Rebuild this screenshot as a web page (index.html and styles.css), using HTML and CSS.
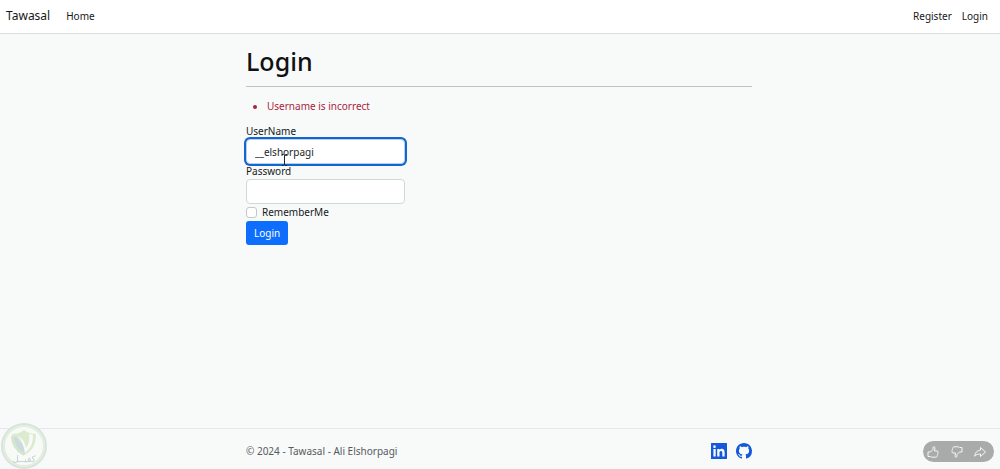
FILE: index.html
```html
<!doctype html>
<html lang="en">
  <head>
    <meta charset="UTF-8" />
    <meta name="viewport" content="width=device-width, initial-scale=1" />
    <title>Login - Tawasal</title>
    <link rel="stylesheet" href="styles.css">
  </head>

  <body>
    <header class="navbar">
      <a class="navbar-brand" href="#">Tawasal</a>
      <nav class="nav-links">
        <a href="#">Home</a>
      </nav>
      <nav class="nav-account">
        <a href="#">Register</a>
        <a href="#">Login</a>
      </nav>
    </header>

    <main class="container">
      <h1>Login</h1>
      <hr />
      <form onsubmit="event.preventDefault()">
        <ul class="validation-summary">
          <li>Username is incorrect</li>
        </ul>
        <div class="form-group">
          <label for="username">UserName</label>
          <div class="field">
            <input class="form-control focused" type="text" id="username" name="username" value="__elshorpagi" />
            <svg class="text-cursor" viewBox="0 0 7 12" aria-hidden="true">
              <path d="M1 .5h1.5l1 1 1-1H6M3.5 1.5v9M1 11.500h1.500l1-1 1 1H6" />
            </svg>
          </div>
        </div>
        <div class="form-group">
          <label for="password">Password</label>
          <input class="form-control" type="password" id="password" name="password" />
        </div>
        <div class="form-check">
          <input type="checkbox" id="remember" name="remember" />
          <label for="remember">RememberMe</label>
        </div>
        <button class="btn-primary" type="submit">Login</button>
      </form>
    </main>

    <footer class="footer">
      <div class="container footer-inner">
        <span>&copy; 2024 - Tawasal - Ali Elshorpagi</span>
        <div class="social">
          <a href="#" aria-label="LinkedIn">
            <svg viewBox="0 0 16 16">
              <path fill-rule="evenodd" d="M0 .5C0 .2.2 0 .5 0h15c.3 0 .5.2.5.5v15c0 .3-.2.5-.5.5H.5a.5.5 0 0 1-.5-.5zM2.400 6v7.500h2.300V6zM3.500 2.300a1.350 1.350 0 1 0 0 2.700 1.350 1.350 0 0 0 0-2.700zM6.200 6v7.500h2.300V9.700c0-1 .4-1.800 1.500-1.800s1.300.9 1.300 1.900v3.700h2.300V9.200c0-2.200-.8-3.400-2.800-3.400-1.200 0-2 .6-2.300 1.200V6z" />
            </svg>
          </a>
          <a href="#" aria-label="GitHub">
            <svg viewBox="0 0 16 16">
              <path d="M8 0C3.580 0 0 3.580 0 8c0 3.540 2.290 6.530 5.470 7.590.4.070.55-.17.55-.38 0-.19-.01-.82-.01-1.490-2.010.37-2.530-.49-2.690-.94-.09-.23-.48-.94-.82-1.130-.28-.15-.68-.52-.01-.53.63-.01 1.080.58 1.230.82.72 1.210 1.870.87 2.330.66.070-.52.28-.87.51-1.070-1.780-.2-3.640-.89-3.640-3.950 0-.87.31-1.590.82-2.150-.08-.2-.36-1.020.08-2.120 0 0 .67-.21 2.200.82.64-.18 1.320-.27 2-.27s1.360.09 2 .27c1.530-1.040 2.200-.82 2.200-.82.44 1.100.16 1.920.08 2.120.51.56.82 1.270.82 2.150 0 3.070-1.870 3.750-3.650 3.950.29.25.54.73.54 1.480 0 1.070-.01 1.930-.01 2.200 0 .21.15.46.55.38A8.010 8.010 0 0 0 16 8c0-4.420-3.580-8-8-8z" />
            </svg>
          </a>
        </div>
      </div>
    </footer>

    <!-- Watermark -->
    <svg class="watermark" viewBox="0 0 48 48" aria-hidden="true">
      <circle cx="24" cy="25" r="22" fill="#f7faf7" stroke="#d7e3e2" stroke-width="2" />
      <circle cx="24" cy="25" r="20" fill="none" stroke="#e1eed9" stroke-width="2" />
      <path d="M24 9c4 3 8 4 12 4 0 10-3 16-11 21C15 29 12 23 12 13c4 0 8-1 12-4z" fill="#dcebcf" />
      <path d="M14 15c4 2 8 7 10 12l1 6C17 28 14 23 14 15z" fill="#ccd9de" />
      <path d="M18 15c4 2 7 6 8 12 3-4 4-9 3-14l4 1c0 8-2 13-8 18-1-7-3-12-7-17z" fill="#f8faf8" />
      <path d="M12 15c0 8 3 14 12 19" fill="none" stroke="#d3e5c7" stroke-width="2" />
      <text x="24" y="41" text-anchor="middle">كفيــل</text>
    </svg>

    <!-- Feedback buttons -->
    <div class="reactions">
      <button type="button" aria-label="Like">
        <svg viewBox="0 0 12 12">
          <path d="M1 6h2.500L6 3.500V1.500C6 .5 8 .5 8 2L7.500 5H10c1.300 0 1.300 1.500.6 1.800.7.5.4 1.400-.2 1.600.5.6 0 1.300-.5 1.500.2.800-.3 1.300-1.100 1.300H4.500L3.500 10.500H1z" />
        </svg>
      </button>
      <button type="button" aria-label="Dislike">
        <svg viewBox="0 0 12 12">
          <path d="M11 6H8.500L6 8.500v2C6 11.500 4 11.500 4 10L4.500 7H2C.7 7 .7 5.500 1.400 5.200.7 4.700 1 3.800 1.600 3.600c-.5-.6 0-1.300.5-1.500C1.900 1.300 2.400.8 3.200.8h4.300l1 .7H11z" />
        </svg>
      </button>
      <button type="button" aria-label="Share">
        <svg viewBox="0 0 12 12">
          <path d="M6.500 1.500 11.500 6l-5 4.500V8C4 8 2 8.500.7 10.300 1 6.500 3 4.500 6.500 4z" />
        </svg>
      </button>
    </div>
  </body>
</html>
```
FILE: styles.css
```css
* {
  box-sizing: border-box;
}

body {
  margin: 0;
  min-height: 100vh;
  display: flex;
  flex-direction: column;
  font-family: "Noto Sans", "Open Sans", sans-serif;
  font-size: 10px;
  line-height: 16px;
  color: #15181b;
  background-color: #f8faf9;
}

a {
  color: #15181b;
  text-decoration: none;
}

.navbar {
  display: flex;
  align-items: center;
  gap: 16px;
  height: 34px;
  padding: 0 12px 2px 6px;
  background-color: #fff;
  border-bottom: 1px solid #dcdfe0;
}

.navbar-brand {
  font-size: 12px;
}

.nav-account {
  display: flex;
  gap: 10px;
  margin-left: auto;
}

.container {
  width: 100%;
  max-width: 508px;
  margin: 0 auto;
  padding-right: 2px;
}

main {
  flex: 1;
}

h1 {
  margin: 12px 0 9px;
  font-size: 25px;
  font-weight: 500;
  line-height: 31px;
  color: #111;
}

hr {
  margin: 0 0 11px;
  border: 0;
  border-top: 1px solid #bfc1c2;
}

.validation-summary {
  margin: 0 0 10px;
  padding-left: 21px;
  color: #a8233f;
}

.form-group > label {
  display: block;
  line-height: 15px;
}

.field {
  position: relative;
  width: 159px;
}

.form-control {
  display: block;
  width: 159px;
  height: 25px;
  padding: 0 8px;
  font: inherit;
  color: #212529;
  background-color: #fff;
  border: 1px solid #d3d6d9;
  border-radius: 4px;
  outline: none;
}

.form-control.focused {
  border-color: #b9cdec;
  box-shadow: 0 0 0 2px #1266d2;
}

.text-cursor {
  position: absolute;
  left: 35px;
  top: 15px;
  width: 7px;
  height: 12px;
  fill: none;
  stroke: #222;
}

.form-check {
  display: flex;
  align-items: center;
  gap: 5px;
}

.form-check input {
  appearance: none;
  width: 11px;
  height: 11px;
  margin: 0;
  background-color: #fff;
  border: 1px solid #c3c7ca;
  border-radius: 3px;
}

.btn-primary {
  display: block;
  height: 24px;
  margin-top: 1px;
  padding: 0 8px;
  font: inherit;
  color: #fff;
  background-color: #0d6efd;
  border: 0;
  border-radius: 3px;
}

.footer {
  border-top: 1px solid #e6e9e9;
  color: #555b60;
}

.footer-inner {
  display: flex;
  align-items: center;
  justify-content: space-between;
  height: 40px;
  padding-top: 4px;
}

.social {
  display: flex;
  gap: 9px;
}

.social svg {
  display: block;
  width: 16px;
  height: 16px;
  fill: #1458dc;
}

.watermark {
  position: fixed;
  left: 0;
  bottom: 0;
  width: 48px;
  height: 48px;
}

.watermark text {
  font-family: "DejaVu Sans", sans-serif;
  font-size: 9px;
  fill: #c3d0d4;
}

.reactions {
  position: fixed;
  right: 6px;
  bottom: 7px;
  display: flex;
  align-items: center;
  justify-content: space-between;
  width: 71px;
  height: 21px;
  padding: 0 8px 0 4px;
  background-color: #a9abaa;
  border-radius: 11px;
}

.reactions button {
  padding: 0;
  background: none;
  border: 0;
}

.reactions svg {
  display: block;
  width: 12px;
  height: 12px;
  fill: none;
  stroke: #f5f5f5;
  stroke-linejoin: round;
}
```
